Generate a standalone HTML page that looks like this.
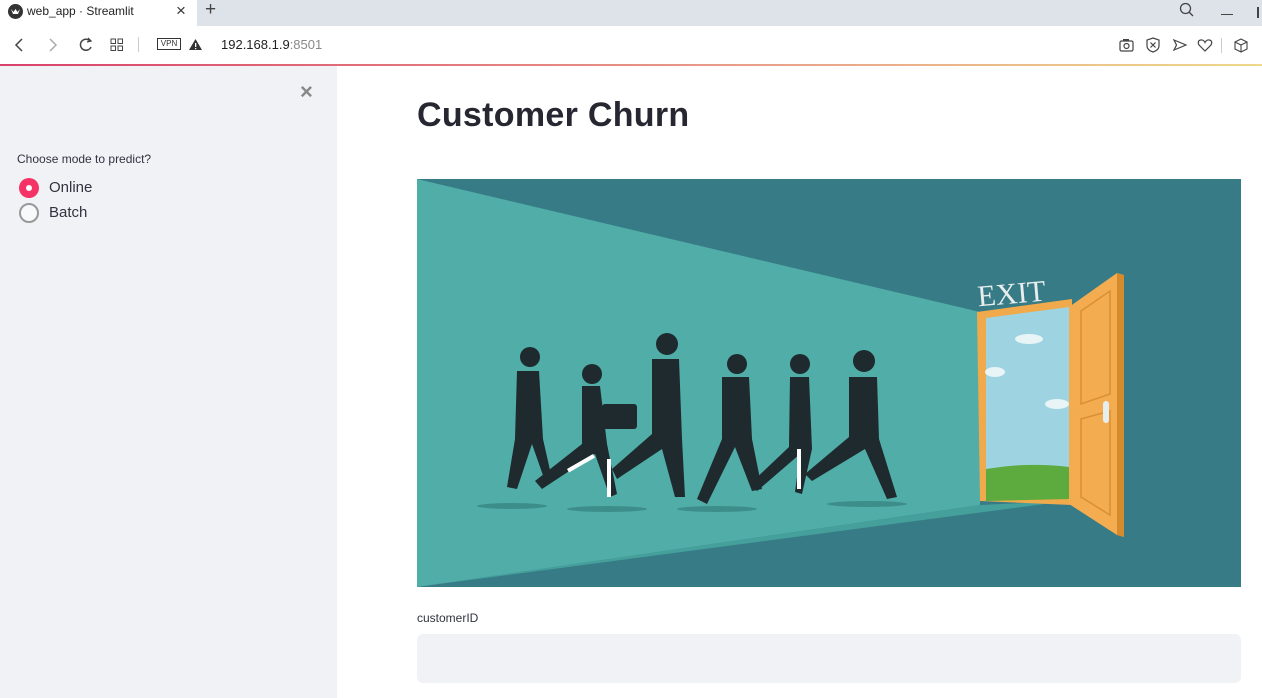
<!DOCTYPE html>
<html><head><meta charset="utf-8"><style>
*{margin:0;padding:0;box-sizing:border-box}
body{width:1262px;height:698px;overflow:hidden;font-family:"Liberation Sans",sans-serif;background:#fff;position:relative}
.abs{position:absolute}
</style></head><body>
<div class="abs" style="left:0;top:0;width:1262px;height:26px;background:#dee3ea"></div>
<div class="abs" style="left:0;top:0;width:197px;height:26px;background:#fff"></div>
<div class="abs" style="left:8px;top:4px;width:15px;height:15px;border-radius:50%;background:#333"></div>
<svg class="abs" style="left:10px;top:8px" width="11" height="7"><path d="M1 1 L3 6 L8 6 L10 1 L7.5 4 L5.5 1 L3.5 4 Z" fill="#fff"/></svg>
<div class="abs" style="left:27px;top:4px;font-size:12px;color:#222">web_app · Streamlit</div>
<div class="abs" style="left:176px;top:1px;font-size:17px;color:#333">×</div>
<div class="abs" style="left:205px;top:-1px;font-size:19px;color:#444">+</div>
<svg class="abs" style="left:1179px;top:2px" width="16" height="16"><circle cx="6.5" cy="6.5" r="5" fill="none" stroke="#444" stroke-width="1.3"/><path d="M10 10 L14 14" stroke="#444" stroke-width="1.3"/></svg>
<div class="abs" style="left:1221px;top:14px;width:12px;height:1px;background:#444"></div>
<div class="abs" style="left:1257px;top:7px;width:2px;height:11px;background:#444"></div>
<svg class="abs" style="left:12px;top:36px" width="120" height="18">
<path d="M10 3 L4 9 L10 15" fill="none" stroke="#444" stroke-width="1.5"/>
<path d="M38 3 L44 9 L38 15" fill="none" stroke="#aaa" stroke-width="1.5"/>
<path d="M78 5 A5.5 5.5 0 1 0 79 11" fill="none" stroke="#444" stroke-width="1.5"/><path d="M76 2 L79 5 L75 6" fill="none" stroke="#444" stroke-width="1.3"/>
<rect x="99" y="3" width="4.5" height="4.5" fill="none" stroke="#444"/><rect x="106" y="3" width="4.5" height="4.5" fill="none" stroke="#444"/><rect x="99" y="10" width="4.5" height="4.5" fill="none" stroke="#444"/><rect x="106" y="10" width="4.5" height="4.5" fill="none" stroke="#444"/>
</svg>
<div class="abs" style="left:138px;top:37px;width:1px;height:15px;background:#ccc"></div>
<div class="abs" style="left:157px;top:38px;width:24px;height:12px;border:1px solid #333;font-size:8px;line-height:10px;text-align:center;color:#333">VPN</div>
<svg class="abs" style="left:188px;top:38px" width="15" height="13"><path d="M7.5 1 L14 12 L1 12 Z" fill="#333"/><rect x="7" y="5" width="1.3" height="4" fill="#fff"/><rect x="7" y="10" width="1.3" height="1.2" fill="#fff"/></svg>
<div class="abs" style="left:221px;top:37px;font-size:13px;color:#222">192.168.1.9<span style="color:#888">:8501</span></div>
<svg class="abs" style="left:1118px;top:36px" width="135" height="18">
<rect x="2" y="5" width="13" height="10" rx="1.5" fill="none" stroke="#444" stroke-width="1.2"/><circle cx="8.5" cy="10" r="2.5" fill="none" stroke="#444" stroke-width="1.2"/><rect x="5" y="3" width="6" height="2" fill="#444"/>
<path d="M35 2 L41 4 L41 10 Q41 14 35 16 Q29 14 29 10 L29 4 Z" fill="none" stroke="#444" stroke-width="1.2"/><path d="M32.5 6.5 L37.5 11.5 M37.5 6.5 L32.5 11.5" stroke="#444" stroke-width="1.2"/>
<path d="M56 4 L68 9 L56 14 L58.5 9 Z" fill="none" stroke="#444" stroke-width="1.2"/>
<path d="M87 15 L81 9 Q79 5 82.5 4 Q85.5 3.5 87 6.5 Q88.5 3.5 91.5 4 Q95 5 93 9 Z" fill="none" stroke="#444" stroke-width="1.2"/>
<rect x="103" y="2" width="1" height="15" fill="#ccc"/>
<path d="M123 3 L129 6 L129 13 L123 16 L117 13 L117 6 Z M117 6 L123 9 L129 6 M123 9 L123 16" fill="none" stroke="#444" stroke-width="1.1"/>
</svg>
<div class="abs" style="left:0;top:64px;width:1262px;height:2px;background:linear-gradient(90deg,#d9416b,#e9a08a 60%,#eed88a)"></div>
<div class="abs" style="left:0;top:66px;width:337px;height:632px;background:#f0f2f6"></div>
<div class="abs" style="left:300px;top:79px;font-size:22px;font-weight:bold;color:#888">×</div>
<div class="abs" style="left:17px;top:152px;font-size:12px;color:#31333f">Choose mode to predict?</div>
<div class="abs" style="left:19px;top:178px;width:20px;height:20px;border-radius:50%;background:#f63366"></div>
<div class="abs" style="left:26px;top:185px;width:6px;height:6px;border-radius:50%;background:#fff"></div>
<div class="abs" style="left:49px;top:179px;font-size:15px;color:#31333f">Online</div>
<div class="abs" style="left:19px;top:203px;width:20px;height:20px;border-radius:50%;border:2px solid #999;background:#f8f9fb"></div>
<div class="abs" style="left:49px;top:204px;font-size:15px;color:#31333f">Batch</div>
<div class="abs" style="left:417px;top:96px;font-size:34px;font-weight:bold;color:#262730;letter-spacing:0.3px">Customer Churn</div>
<svg class="abs" style="left:417px;top:179px" width="824" height="408" viewBox="0 0 824 408">
<rect width="824" height="408" fill="#367b85"/>
<path d="M0 0 L563 133 L563 326 L0 408 Z" fill="#50ada8"/>
<path d="M563 326 L650 322 L0 408 Z" fill="#45a09b"/>
<text x="560" y="124" font-family="Liberation Serif,serif" font-size="30" fill="#e8eeee" transform="rotate(-5 600 110)">EXIT</text>
<path d="M560 133 L655 120 L655 326 L563 322 Z" fill="#f0a94b"/>
<path d="M569 139 L652 128 L652 300 L569 304 Z" fill="#9ed4e2"/>
<path d="M569 290 Q610 283 652 288 L652 320 L569 322 Z" fill="#5daa3e"/>
<ellipse cx="612" cy="160" rx="14" ry="5" fill="#e8f4f6"/><ellipse cx="578" cy="193" rx="10" ry="5" fill="#e8f4f6"/><ellipse cx="640" cy="225" rx="12" ry="5" fill="#e8f4f6"/>
<path d="M652 128 L700 94 L707 96 L707 358 L700 356 L652 325 Z" fill="#f3ac4f"/>
<path d="M700 94 L707 96 L707 358 L700 356 Z" fill="#d58a2b"/>
<path d="M664 132 L693 112 L693 215 L664 225 Z M664 240 L693 232 L693 336 L664 318 Z" fill="none" stroke="#d99035" stroke-width="1.5"/>
<rect x="686" y="222" width="6" height="22" rx="3" fill="#e6eef0"/>
<g fill="#1e2a2e">
<ellipse cx="95" cy="327" rx="35" ry="3" fill="#3d8e8a"/><ellipse cx="190" cy="330" rx="40" ry="3" fill="#3d8e8a"/><ellipse cx="300" cy="330" rx="40" ry="3" fill="#3d8e8a"/><ellipse cx="450" cy="325" rx="40" ry="3" fill="#3d8e8a"/>
<circle cx="113" cy="178" r="10"/><path d="M100 192 L122 192 L126 260 L135 300 L128 302 L115 265 L100 310 L90 308 L98 260 Z"/>
<circle cx="175" cy="195" r="10"/><path d="M165 207 L183 207 L190 265 L200 315 L193 318 L178 275 L125 310 L118 302 L165 265 Z"/>
<circle cx="250" cy="165" r="11"/><path d="M235 180 L262 180 L265 260 L268 318 L258 318 L245 270 L200 300 L195 290 L235 255 Z"/>
<rect x="185" y="225" width="35" height="25" rx="3"/>
<circle cx="320" cy="185" r="10"/><path d="M305 198 L332 198 L335 260 L345 310 L335 312 L318 268 L290 325 L280 320 L305 260 Z"/>
<circle cx="383" cy="185" r="10"/><path d="M373 198 L392 198 L395 270 L385 315 L378 313 L383 275 L340 312 L333 305 L372 268 Z"/>
<circle cx="447" cy="182" r="11"/><path d="M432 198 L460 198 L462 260 L480 318 L470 320 L448 270 L395 302 L388 295 L432 258 Z"/>
</g>
<g fill="#fff"><rect x="190" y="280" width="4" height="38"/><rect x="380" y="270" width="4" height="40"/><rect x="150" y="290" width="30" height="4" transform="rotate(-30 150 290)"/></g>
</svg>
<div class="abs" style="left:417px;top:611px;font-size:12px;color:#31333f">customerID</div>
<div class="abs" style="left:417px;top:634px;width:824px;height:49px;border-radius:6px;background:#f0f2f6"></div>
</body></html>
